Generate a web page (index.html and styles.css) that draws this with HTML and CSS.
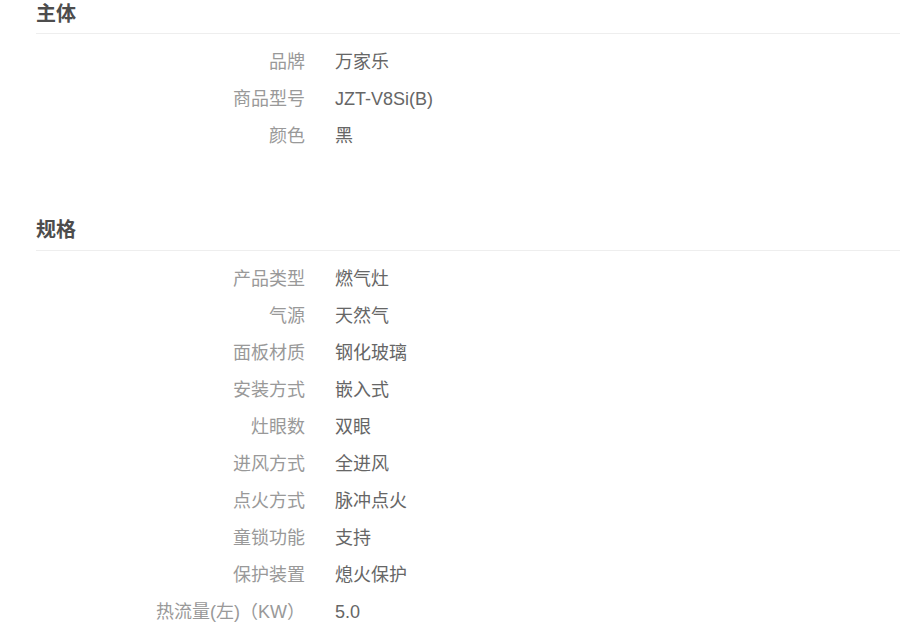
FILE: index.html
```html
<!DOCTYPE html>
<html lang="zh-CN">
<head>
  <meta charset="UTF-8" />
  <meta name="viewport" content="width=device-width, initial-scale=1.0" />
  <title>规格参数</title>
  <link rel="stylesheet" href="styles.css">
</head>
<body>
  <div class="spec">
    <section class="spec-group">
      <h3>主体</h3>
      <dl>
        <div class="row"><dt>品牌</dt><dd>万家乐</dd></div>
        <div class="row"><dt>商品型号</dt><dd>JZT-V8Si(B)</dd></div>
        <div class="row"><dt>颜色</dt><dd>黑</dd></div>
      </dl>
    </section>

    <section class="spec-group">
      <h3>规格</h3>
      <dl>
        <div class="row"><dt>产品类型</dt><dd>燃气灶</dd></div>
        <div class="row"><dt>气源</dt><dd>天然气</dd></div>
        <div class="row"><dt>面板材质</dt><dd>钢化玻璃</dd></div>
        <div class="row"><dt>安装方式</dt><dd>嵌入式</dd></div>
        <div class="row"><dt>灶眼数</dt><dd>双眼</dd></div>
        <div class="row"><dt>进风方式</dt><dd>全进风</dd></div>
        <div class="row"><dt>点火方式</dt><dd>脉冲点火</dd></div>
        <div class="row"><dt>童锁功能</dt><dd>支持</dd></div>
        <div class="row"><dt>保护装置</dt><dd>熄火保护</dd></div>
        <div class="row"><dt>热流量(左)（KW）</dt><dd>5.0</dd></div>
      </dl>
    </section>
  </div>
</body>
</html>
```

FILE: styles.css
```css
* {
  box-sizing: border-box;
  margin: 0;
  padding: 0;
}

body {
  font-family: "Liberation Sans", "Noto Sans CJK SC", sans-serif;
  background: #fff;
  color: #666;
}

.spec {
  padding-left: 36px;
}

.spec-group + .spec-group {
  margin-top: 61px;
}

.spec-group h3 {
  font-size: 20px;
  font-weight: bold;
  line-height: 28px;
  color: #4d4d4d;
  padding-bottom: 5px;
  border-bottom: 1px solid #eee;
}

.spec-group + .spec-group h3 {
  padding-bottom: 6px;
}

.spec-group dl {
  padding-top: 10px;
}

.row {
  display: flex;
  font-size: 18px;
  line-height: 37px;
}

.row dt {
  width: 269px;
  text-align: right;
  color: #999;
}

.row dd {
  margin-left: 30px;
  color: #666;
}
```
